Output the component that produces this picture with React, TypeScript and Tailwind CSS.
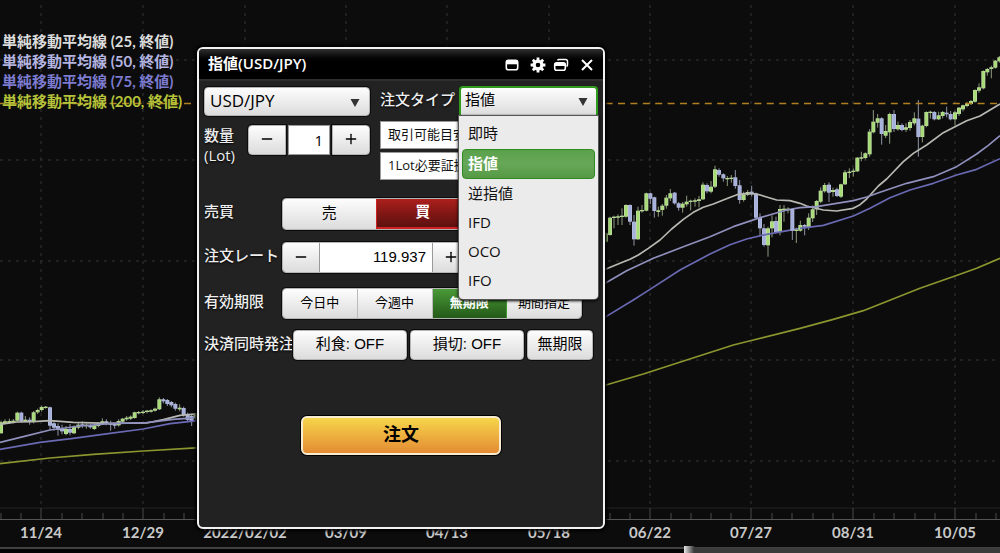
import { useState } from "react";
import type { ReactNode } from "react";
import clsx from "clsx";
import { Minus, Plus } from "lucide-react";

// [x, top, bottom, high, low, up?]
type Candle = [number, number, number, number, number, (0 | 1)?];

type Segment = {
  dx: number;
  dy: number;
  candles: Candle[];
  lines: { color: string; points: string }[];
};

const WHITE = "#b9b9b4";
const LILAC = "#8f90bd";
const PURPLE = "#6a69b4";
const OLIVE = "#8c962f";

// chart data, 3 units per pixel
const SEGMENTS: Segment[] = [
  {
    dx: 0,
    dy: 1140,
    candles: [
      [3, 127, 160, 122, 160, 1], [15, 124, 130, 118, 132, 1], [28, 123, 129, 116, 132, 1],
      [40, 122, 128, 117, 130, 1], [52, 98, 122, 95, 126, 1], [64, 98, 123, 95, 128],
      [76, 119, 123, 108, 126, 1], [89, 119, 124, 112, 134], [101, 97, 124, 93, 130, 1],
      [113, 90, 97, 86, 102, 1], [125, 81, 90, 77, 95, 1], [137, 80, 84, 78, 86, 1],
      [150, 82, 137, 80, 150], [162, 130, 143, 122, 152], [174, 138, 150, 130, 167],
      [186, 144, 154, 134, 163], [198, 147, 162, 138, 166, 1], [210, 147, 158, 132, 166],
      [222, 140, 160, 136, 162, 1], [235, 134, 143, 126, 148, 1], [247, 133, 138, 124, 144],
      [259, 134, 139, 130, 146, 1], [271, 135, 142, 131, 146], [283, 136, 147, 134, 150, 1],
      [295, 130, 138, 128, 142, 1], [307, 124, 131, 115, 134, 1], [319, 124, 131, 118, 136],
      [332, 130, 135, 122, 152], [344, 131, 137, 128, 146], [356, 123, 136, 118, 140, 1],
      [368, 116, 125, 114, 130, 1], [380, 113, 118, 108, 122, 1], [392, 110, 116, 106, 120, 1],
      [404, 97, 114, 95, 116, 1], [416, 96, 100, 93, 103, 1], [429, 95, 99, 90, 102, 1],
      [441, 92, 96, 90, 100, 1], [453, 91, 95, 88, 98, 1], [465, 86, 92, 83, 95, 1],
      [478, 58, 88, 52, 90, 1], [490, 58, 64, 54, 70], [502, 60, 72, 57, 78],
      [514, 66, 76, 63, 82], [526, 72, 86, 68, 92], [539, 83, 88, 73, 94, 1],
      [551, 84, 104, 80, 110], [563, 104, 120, 98, 126], [575, 108, 124, 102, 138],
      [587, 105, 114, 100, 120, 1],
    ],
    lines: [
      { color: WHITE, points: "0,133 50,126 100,125 150,122 220,127 330,130 440,129 490,119 540,106 600,101" },
      { color: LILAC, points: "0,187 70,170 150,150 240,138 340,130 440,128 520,118 600,112" },
      { color: PURPLE, points: "0,208 120,187 220,175 330,160 430,147 510,131 600,121" },
      { color: OLIVE, points: "0,251 150,234 280,223 430,213 600,203" },
    ],
  },
  {
    dx: 1800,
    dy: 450,
    candles: [
      [18, 250, 275, 245, 278, 1], [30, 203, 255, 200, 257, 1], [42, 200, 204, 197, 235, 1],
      [54, 199, 203, 193, 225, 1], [66, 197, 201, 175, 225, 1], [78, 165, 200, 163, 203, 1],
      [90, 165, 215, 163, 225], [102, 215, 268, 195, 287], [114, 182, 268, 170, 270, 1],
      [126, 180, 184, 165, 188, 1], [139, 130, 182, 128, 184, 1], [151, 130, 146, 128, 162],
      [163, 142, 183, 140, 203], [175, 181, 186, 170, 200, 1], [187, 167, 180, 162, 197, 1],
      [199, 143, 167, 135, 176, 1], [211, 130, 145, 117, 153, 1], [224, 128, 160, 126, 164],
      [236, 160, 173, 156, 182], [248, 161, 173, 156, 188, 1], [260, 155, 163, 137, 170, 1],
      [272, 152, 156, 149, 181, 1], [285, 151, 155, 145, 170, 1], [297, 148, 153, 138, 172, 1],
      [309, 104, 148, 97, 150, 1], [321, 105, 124, 100, 130], [333, 110, 125, 93, 130, 1],
      [345, 58, 110, 47, 114, 1], [357, 60, 74, 55, 80], [370, 73, 85, 70, 95],
      [382, 84, 88, 78, 108, 1], [394, 83, 87, 75, 98, 1], [406, 82, 108, 60, 116],
      [419, 106, 150, 90, 161], [431, 133, 150, 125, 155, 1], [443, 126, 134, 120, 138, 1],
      [455, 125, 133, 107, 140], [468, 131, 203, 128, 210], [480, 203, 235, 190, 258],
      [492, 235, 285, 222, 290], [504, 235, 286, 230, 320, 1], [516, 214, 235, 196, 262, 1],
      [528, 213, 246, 200, 250], [540, 177, 246, 165, 256, 1], [552, 176, 180, 165, 215, 1],
      [564, 176, 181, 172, 190, 1],
    ],
    lines: [
      { color: WHITE, points: "0,363 18,357 60,340 90,328 115,315 145,295 180,270 215,237 250,208 280,187 310,172 340,162 370,150 395,140 415,133 445,130 470,132 500,141 530,150 570,152 600,160" },
      { color: LILAC, points: "0,408 18,398 80,362 160,325 250,290 330,260 400,230 480,203 560,180 600,173" },
      { color: PURPLE, points: "0,511 18,500 100,450 150,418 240,360 330,312 390,284 440,267 500,253 600,235" },
      { color: OLIVE, points: "0,709 18,705 130,672 260,630 400,585 460,570 600,535 700,508 790,482 960,415 1065,378 1130,355 1200,325" },
    ],
  },
  {
    dx: 2370,
    dy: 0,
    candles: [
      [7, 627, 692, 625, 720], [19, 689, 693, 683, 729, 1], [31, 675, 692, 662, 695, 1],
      [44, 675, 680, 672, 706], [56, 653, 681, 640, 690, 1], [68, 628, 655, 616, 666, 1],
      [80, 603, 628, 600, 645, 1], [92, 572, 605, 562, 610, 1], [104, 555, 574, 549, 578, 1],
      [117, 554, 578, 547, 606], [129, 570, 576, 563, 590, 1], [141, 568, 588, 563, 591],
      [153, 553, 590, 551, 594, 1], [165, 517, 553, 510, 555, 1], [178, 515, 519, 505, 534, 1],
      [190, 512, 516, 505, 530, 1], [202, 473, 514, 471, 516, 1], [214, 472, 476, 455, 484, 1],
      [226, 460, 474, 457, 478, 1], [239, 395, 463, 387, 470, 1], [250, 365, 397, 330, 400, 1],
      [263, 355, 368, 342, 383, 1], [275, 355, 402, 352, 434], [287, 393, 407, 375, 414, 1],
      [299, 342, 397, 338, 431, 1], [312, 342, 387, 330, 396], [324, 375, 388, 365, 392, 1],
      [336, 375, 390, 370, 394], [348, 382, 389, 370, 396, 1], [360, 366, 384, 360, 392, 1],
      [373, 355, 370, 337, 376, 1], [385, 356, 411, 300, 470], [397, 377, 411, 374, 427, 1],
      [409, 336, 378, 334, 382, 1], [421, 335, 339, 332, 356, 1], [433, 336, 358, 333, 361],
      [446, 346, 358, 335, 360, 1], [458, 336, 348, 333, 355, 1], [470, 338, 343, 320, 352],
      [482, 342, 358, 333, 361], [495, 337, 358, 333, 376, 1], [507, 323, 342, 321, 348, 1],
      [519, 316, 328, 314, 334, 1], [531, 309, 318, 306, 322, 1], [543, 303, 312, 300, 315, 1],
      [555, 270, 305, 268, 308, 1], [567, 262, 272, 250, 278, 1], [580, 213, 265, 211, 268, 1],
      [592, 207, 217, 204, 227, 1], [604, 202, 207, 197, 235, 1], [616, 182, 203, 180, 206, 1],
      [628, 172, 184, 168, 188, 1],
    ],
    lines: [
      { color: WHITE, points: "30,610 50,618 100,630 140,633 190,625 210,614 230,597 265,558 290,537 340,485 370,460 410,435 460,398 530,362 570,348 630,312" },
      { color: LILAC, points: "30,623 80,620 190,602 230,591 270,577 350,550 430,530 500,500 560,462 595,436 630,407" },
      { color: PURPLE, points: "30,685 100,676 190,648 240,625 300,593 360,570 430,550 500,525 560,508 630,476" },
    ],
  },
];

const DATES = [
  { x: 41, label: "11/24" },
  { x: 143, label: "12/29" },
  { x: 245, label: "2022/02/02" },
  { x: 346, label: "03/09" },
  { x: 447, label: "04/13" },
  { x: 549, label: "05/18" },
  { x: 650, label: "06/22" },
  { x: 751, label: "07/27" },
  { x: 853, label: "08/31" },
  { x: 955, label: "10/05" },
];

const LEGEND = [
  { text: "単純移動平均線 (25, 終値)", color: "text-[#dcdcdc]" },
  { text: "単純移動平均線 (50, 終値)", color: "text-[#b4b4e0]" },
  { text: "単純移動平均線 (75, 終値)", color: "text-[#7c7bd0]" },
  { text: "単純移動平均線 (200, 終値)", color: "text-[#b5c23a]" },
];

const ORDER_TYPES = ["即時", "指値", "逆指値", "IFD", "OCO", "IFO"];
const TERMS = ["今日中", "今週中", "無期限", "期間指定"];

const FACE = "bg-gradient-to-b from-[#fdfdfd] to-[#dcdcdc] text-black";
const EDGE = "shadow-[0_0_0_1px_#0c0c0c] border border-[#b5b5b5]";
const STEP = "grid flex-1 place-items-center";

function Chart() {
  return (
    <svg
      viewBox="0 0 1000 553"
      preserveAspectRatio="xMinYMin slice"
      className="absolute inset-0 h-full w-full"
      aria-hidden="true"
    >
      <defs>
        <linearGradient id="thumb" x1="0" x2="1" y1="0" y2="0">
          <stop offset="0" stopColor="#e8e8e8" />
          <stop offset="1" stopColor="#3c3b3b" />
        </linearGradient>
      </defs>

      {/* grid */}
      <g stroke="#353535" strokeWidth="1" strokeDasharray="3 5">
        {[60, 160, 261, 360, 461].map((y) => (
          <line key={y} x1="0" x2="1000" y1={y} y2={y} />
        ))}
        {DATES.map((d) => (
          <line key={d.x} x1={d.x} x2={d.x} y1="-3" y2="508" />
        ))}
      </g>

      {/* time axis */}
      <line x1="0" x2="1000" y1="508" y2="508" stroke="#222" />
      <line x1="0" x2="1000" y1="519.5" y2="519.5" stroke="#555" />
      {DATES.map((d) => (
        <g key={d.x} stroke="#4a4a4a">
          <line x1={d.x} x2={d.x} y1="508" y2="519" />
          {[-40, -20, 21, 41].map((o) => (
            <line key={o} x1={d.x + o} x2={d.x + o} y1="513" y2="519" />
          ))}
        </g>
      ))}

      {/* price series */}
      {SEGMENTS.map((s) => (
        <g key={s.dx} transform={`scale(.33333) translate(${s.dx} ${s.dy})`}>
          {s.candles.map(([x, top, bottom, high, low, up]) => (
            <g key={x}>
              <rect x={x - 1.5} y={high} width="3" height={low - high} fill={up ? "#8b9a7c" : "#8f93a6"} />
              <rect x={x - 6} y={top} width="12" height={bottom - top} fill={up ? "#bfd9a4" : "#b4bbdc"} />
              <rect x={x - 3.5} y={top + 1} width="7" height={Math.max(bottom - top - 2, 1)} fill={up ? "#a6dc74" : "#a5b0dc"} />
            </g>
          ))}
          {s.lines.map((l) => (
            <polyline key={l.color} points={l.points} fill="none" stroke={l.color} strokeWidth="5" strokeLinejoin="round" />
          ))}
        </g>
      ))}

      {/* current rate */}
      <line x1="-2" x2="1000" y1="103.5" y2="103.5" stroke="#b08020" strokeWidth="1.6" strokeDasharray="7 5.4" />

      <g fill="#c9c9c9" className="font-['Lato',sans-serif] text-[15px] font-bold" textAnchor="middle">
        {DATES.map((d) => (
          <text key={d.x} x={d.x} y="538">
            {d.label}
          </text>
        ))}
      </g>

      {/* scroll bar */}
      <rect x="0" y="547" width="1000" height="2" fill="#414141" />
      <rect x="0" y="549" width="1000" height="4" fill="#050505" />
      <rect x="692" y="548" width="308" height="5" fill="#3c3b3b" />
      <rect x="684" y="546" width="10" height="7" fill="url(#thumb)" />
    </svg>
  );
}

function TitleIcon({ label, children }: { label: string; children: ReactNode }) {
  return (
    <button type="button" aria-label={label}>
      <svg viewBox="0 0 16 16" className="block size-4" fill="none" stroke="white">
        {children}
      </svg>
    </button>
  );
}

function TitleBar() {
  return (
    <header className="flex h-8 items-center justify-between rounded-t border-b-2 border-[#2e2e2e] bg-gradient-to-b from-[#303030] to-black to-50% pr-2 pl-[9px]">
      <h1 className="pb-0.5 text-[15px] leading-5 font-semibold text-white">指値(USD/JPY)</h1>
      <div className="flex items-center gap-2.5 pt-0.5">
        <TitleIcon label="最小化">
          <rect x="2.3" y="3.3" width="11.4" height="9.4" rx="2" strokeWidth="1.6" />
          <path d="M2.5 5.5h11" strokeWidth="3.6" />
        </TitleIcon>
        <div className="flex items-center gap-[7px]">
          <TitleIcon label="設定">
            <circle cx="8" cy="8" r="3.9" strokeWidth="3.2" />
            <path
              d="M8 .6v2.4M8 13v2.4M.6 8h2.4M13 8h2.4M2.8 2.8l1.7 1.7M11.5 11.5l1.7 1.7M2.8 13.2l1.7-1.7M11.5 4.5l1.7-1.7"
              strokeWidth="2.8"
            />
          </TitleIcon>
          <TitleIcon label="別ウィンドウ">
            <path d="M4.5 3.4Q5 2.6 6 2.6h6.5q2 0 2 2v3q0 1.5-1 1.9" strokeWidth="1.5" />
            <rect x="1.7" y="5.7" width="10.6" height="7.6" rx="2" strokeWidth="1.6" />
            <path d="M2 7.5h10" strokeWidth="3" />
          </TitleIcon>
        </div>
        <TitleIcon label="閉じる">
          <path d="M3 3l10 10M13 3L3 13" strokeWidth="2" />
        </TitleIcon>
      </div>
    </header>
  );
}

function Arrow() {
  return (
    <svg viewBox="0 0 10 8" className="pointer-events-none absolute top-3 right-2.5 h-2 w-2.5">
      <path d="M0.5 0h9L5 8z" fill="#333" />
    </svg>
  );
}

function Caption({ children }: { children: ReactNode }) {
  return (
    <span className="text-[15px] leading-5 font-medium whitespace-nowrap text-[#eee] [text-shadow:0_1px_2px_#000]">
      {children}
    </span>
  );
}

function OrderTypeSelect() {
  const [type, setType] = useState("指値");

  return (
    <div className="relative flex-1">
      <select
        id="type"
        value={type}
        onChange={(e) => setType(e.target.value)}
        className={clsx(
          "block h-[30px] w-full appearance-none rounded-t border-2 border-b border-[#2f9a1c] border-b-[#777] pb-1 pl-1 text-[15px] outline-none",
          FACE
        )}
      >
        {ORDER_TYPES.map((t) => (
          <option key={t}>{t}</option>
        ))}
      </select>
      <Arrow />
      <ul
        role="listbox"
        aria-label="注文タイプ"
        className="absolute inset-x-0 top-full z-10 rounded-b bg-[#ebebeb] px-[3px] pt-[3px] pb-[3px] shadow-[0_0_0_1px_#555,0_1px_3px_1px_#000]"
      >
        {ORDER_TYPES.map((t) => (
          <li key={t} role="option" aria-selected={t === type}>
            <button
              type="button"
              onClick={() => setType(t)}
              className={clsx(
                "block w-full rounded border px-[5px] pb-0.5 text-left text-[15px]",
                /^[A-Z]/.test(t) ? "leading-[25px]" : "leading-[26px]",
                t === type
                  ? "border-[#2f8a20] bg-gradient-to-b from-[#5ba14c] via-[#66a757] to-[#559945] font-bold text-white"
                  : "border-transparent text-[#111]"
              )}
            >
              {t}
            </button>
          </li>
        ))}
      </ul>
    </div>
  );
}

function Row({ label, children }: { label: string; children: ReactNode }) {
  return (
    <div className="flex items-center">
      <div className="w-[78px] shrink-0 pb-1.5">
        <Caption>{label}</Caption>
      </div>
      {children}
    </div>
  );
}

function OrderWindow() {
  const [lot, setLot] = useState(1);
  const [rate, setRate] = useState(119.937);
  const [side, setSide] = useState("買");
  const [term, setTerm] = useState("無期限");

  return (
    <section className="absolute top-[47px] left-[197px] w-[408px] rounded-md border-2 border-[#f2f2f2] bg-[#222] shadow-[0_0_3px_2px_#000]">
      <TitleBar />
      <form className="px-[5px] pt-[5px] pb-[72px]" onSubmit={(e) => e.preventDefault()}>
        <div className="flex items-center">
          <div className="relative w-[166px]">
            <select
              aria-label="通貨ペア"
              className={clsx("block h-[29px] w-full appearance-none rounded pl-[5px] text-[17px] outline-none", FACE, EDGE)}
            >
              <option>USD/JPY</option>
            </select>
            <Arrow />
          </div>
          <label htmlFor="type" className="w-[89px] pb-1 pl-2.5">
            <Caption>注文タイプ</Caption>
          </label>
          <OrderTypeSelect />
        </div>

        <div className="mt-[5px] flex">
          <label htmlFor="lot" className="w-11 pt-1 leading-5">
            <Caption>数量</Caption>
            <br />
            <Caption>(Lot)</Caption>
          </label>
          <div className="flex w-[122px] gap-0.5 pt-1">
            <button type="button" aria-label="数量を減らす" onClick={() => setLot(Math.max(1, lot - 1))} className={clsx("h-[30px] rounded-l pb-0.5", STEP, FACE, EDGE)}>
              <Minus className="size-4" strokeWidth={2} />
            </button>
            <input
              id="lot"
              value={lot}
              onChange={(e) => setLot(Number(e.target.value) || 1)}
              className="h-[30px] w-[42px] border border-[#999] bg-white pr-1.5 text-right text-[15px] text-black"
            />
            <button type="button" aria-label="数量を増やす" onClick={() => setLot(lot + 1)} className={clsx("h-[30px] rounded-r pb-0.5", STEP, FACE, EDGE)}>
              <Plus className="size-4" strokeWidth={2} />
            </button>
          </div>
          <div className="ml-2.5 flex min-w-0 flex-1 flex-col gap-[3px] text-[13px] whitespace-nowrap text-[#111]">
            <div className="h-7 border border-[#999] bg-white px-[7px] leading-6">取引可能目安</div>
            <div className="h-7 border border-[#999] bg-white px-[7px] leading-6">1Lot必要証拠</div>
          </div>
        </div>

        <div className="mt-[18px]">
          <Row label="売買">
            <div className={clsx("flex h-8 w-[188px] overflow-hidden rounded", EDGE)}>
              {["売", "買"].map((s) => (
                <button
                  key={s}
                  type="button"
                  aria-pressed={s === side}
                  onClick={() => setSide(s)}
                  className={clsx(
                    "flex-1 pb-1 text-[15px]",
                    s === side
                      ? "border-b-2 border-l border-[#c22] bg-gradient-to-b from-[#ac1f1c] to-[#5c100f] font-bold text-white"
                      : FACE
                  )}
                >
                  {s}
                </button>
              ))}
            </div>
          </Row>
        </div>

        <div className="mt-3">
          <Row label="注文レート">
            <div className={clsx("flex h-[31px] w-[188px] overflow-hidden rounded", EDGE)}>
              <button type="button" aria-label="レートを下げる" onClick={() => setRate(rate - 0.001)} className={clsx("pb-0.5", STEP, FACE)}>
                <Minus className="size-4" strokeWidth={2} />
              </button>
              <input
                aria-label="注文レート"
                value={rate.toFixed(3)}
                onChange={(e) => setRate(Number(e.target.value) || 0)}
                className="w-[114px] border-x border-[#999] bg-white pr-1.5 text-right font-['Liberation_Sans',sans-serif] text-[15px] text-black"
              />
              <button type="button" aria-label="レートを上げる" onClick={() => setRate(rate + 0.001)} className={clsx("pb-0.5", STEP, FACE)}>
                <Plus className="size-4" strokeWidth={2} />
              </button>
            </div>
          </Row>
        </div>

        <div className="mt-[15px]">
          <Row label="有効期限">
            <div className={clsx("flex h-[31px] w-[300px] overflow-hidden rounded", EDGE)}>
              {TERMS.map((t) => (
                <button
                  key={t}
                  type="button"
                  aria-pressed={t === term}
                  onClick={() => setTerm(t)}
                  className={clsx(
                    "flex-1 border-r pb-0.5 text-[13px] last:border-r-0",
                    t === term
                      ? "border-[#3b9a2a] bg-gradient-to-b from-[#4a9a38] to-[#245a18] font-bold text-white"
                      : "border-[#bbb] bg-gradient-to-b from-[#fdfdfd] to-[#dcdcdc] text-black"
                  )}
                >
                  {t}
                </button>
              ))}
            </div>
          </Row>
        </div>

        <div className="mt-[11px] flex items-center font-['Liberation_Sans','Noto_Sans_CJK_JP',sans-serif]">
          <div className="w-[89px] shrink-0 pb-0.5">
            <Caption>決済同時発注</Caption>
          </div>
          <div className="flex gap-[3px] text-[15px]">
            <button type="button" className={clsx("h-[30px] w-[114px] rounded pb-0.5", FACE, EDGE)}>
              利食: OFF
            </button>
            <button type="button" className={clsx("h-[30px] w-[114px] rounded pb-0.5", FACE, EDGE)}>
              損切: OFF
            </button>
            <button type="button" className={clsx("h-[30px] w-[66px] rounded pb-0.5", FACE, EDGE)}>
              無期限
            </button>
          </div>
        </div>

        <button
          type="submit"
          className="mx-auto mt-14 block h-[39px] w-[200px] rounded-md border-2 border-[#f7ecd2] bg-gradient-to-b from-[#f5d54a] to-[#e38c34] pb-0.5 text-[18px] font-bold text-black shadow-[0_0_0_1px_#000]"
        >
          注文
        </button>
      </form>
    </section>
  );
}

export default function App() {
  return (
    <main className="relative min-h-screen overflow-hidden bg-[#0c0c0c] font-['Open_Sans','Noto_Sans_CJK_JP',sans-serif]">
      <Chart />
      <ul className="relative pt-[31px] pl-0.5 font-['Lato','Noto_Sans_CJK_JP',sans-serif] text-[15px] leading-5 font-bold">
        {LEGEND.map((l) => (
          <li key={l.text} className={l.color}>
            {l.text}
          </li>
        ))}
      </ul>
      <OrderWindow />
    </main>
  );
}
